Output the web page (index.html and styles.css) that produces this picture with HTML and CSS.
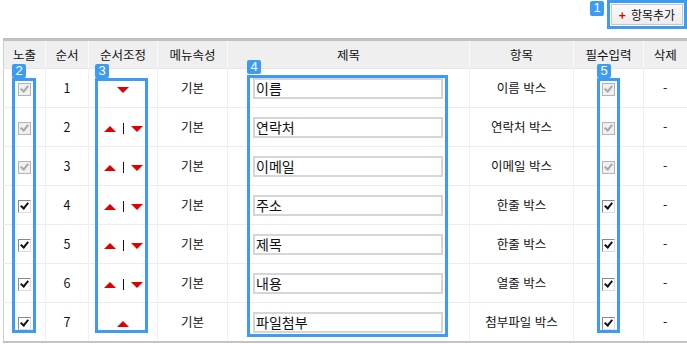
FILE: index.html
```html
<!DOCTYPE html>
<html lang="ko">
<head>
    <meta charset="UTF-8">
    <title>항목 관리</title>
    <link rel="stylesheet" href="styles.css">
</head>
<body>
    <div class="toolbar">
        <span class="badge badge-one">1</span>
        <span class="hl-button">
            <button class="add-btn"><span class="plus">+</span>항목추가</button>
        </span>
    </div>

    <div class="table-wrap">
        <table class="items">
            <colgroup>
                <col style="width:42px"><col style="width:43px"><col style="width:69px"><col style="width:70px">
                <col style="width:242px"><col style="width:104px"><col style="width:70px"><col style="width:43px">
            </colgroup>
            <thead>
                <tr>
                    <th>노출</th><th>순서</th><th>순서조정</th><th>메뉴속성</th>
                    <th>제목</th><th>항목</th><th>필수입력</th><th>삭제</th>
                </tr>
            </thead>
            <tbody>
                <tr>
                    <td><span class="chk off"></span></td><td>1</td>
                    <td><span class="arrow down"></span></td><td>기본</td>
                    <td><div class="field">이름</div></td><td>이름 박스</td>
                    <td><span class="chk off"></span></td><td>-</td>
                </tr>
                <tr>
                    <td><span class="chk off"></span></td><td>2</td>
                    <td><span class="arrow up"></span><span class="sep"></span><span class="arrow down"></span></td><td>기본</td>
                    <td><div class="field">연락처</div></td><td>연락처 박스</td>
                    <td><span class="chk off"></span></td><td>-</td>
                </tr>
                <tr>
                    <td><span class="chk off"></span></td><td>3</td>
                    <td><span class="arrow up"></span><span class="sep"></span><span class="arrow down"></span></td><td>기본</td>
                    <td><div class="field">이메일</div></td><td>이메일 박스</td>
                    <td><span class="chk off"></span></td><td>-</td>
                </tr>
                <tr>
                    <td><span class="chk on"></span></td><td>4</td>
                    <td><span class="arrow up"></span><span class="sep"></span><span class="arrow down"></span></td><td>기본</td>
                    <td><div class="field">주소</div></td><td>한줄 박스</td>
                    <td><span class="chk on"></span></td><td>-</td>
                </tr>
                <tr>
                    <td><span class="chk on"></span></td><td>5</td>
                    <td><span class="arrow up"></span><span class="sep"></span><span class="arrow down"></span></td><td>기본</td>
                    <td><div class="field">제목</div></td><td>한줄 박스</td>
                    <td><span class="chk on"></span></td><td>-</td>
                </tr>
                <tr>
                    <td><span class="chk on"></span></td><td>6</td>
                    <td><span class="arrow up"></span><span class="sep"></span><span class="arrow down"></span></td><td>기본</td>
                    <td><div class="field">내용</div></td><td>열줄 박스</td>
                    <td><span class="chk on"></span></td><td>-</td>
                </tr>
                <tr>
                    <td><span class="chk on"></span></td><td>7</td>
                    <td><span class="arrow up"></span></td><td>기본</td>
                    <td><div class="field">파일첨부</div></td><td>첨부파일 박스</td>
                    <td><span class="chk on"></span></td><td>-</td>
                </tr>
            </tbody>
        </table>

        <!-- annotation boxes -->
        <span class="badge" style="left:12px;top:26px">2</span>
        <div class="hl" style="left:12px;top:40px;width:24px;height:255px"></div>
        <span class="badge" style="left:95px;top:26px">3</span>
        <div class="hl" style="left:95px;top:40px;width:53px;height:255px"></div>
        <span class="badge" style="left:247px;top:22px">4</span>
        <div class="hl" style="left:247px;top:37px;width:201px;height:262px"></div>
        <span class="badge" style="left:597px;top:26px">5</span>
        <div class="hl" style="left:597px;top:40px;width:23px;height:255px"></div>
    </div>
</body>
</html>
```

FILE: styles.css
```css
body {
    margin: 0;
    font-family: "Noto Sans CJK KR", "DejaVu Sans", sans-serif;
    font-size: 12px;
    color: #111;
    background: #fff;
}
.toolbar {
    height: 38px;
    display: flex;
    justify-content: flex-end;
    align-items: flex-start;
}
.hl-button {
    display: flex;
    align-items: center;
    justify-content: center;
    width: 80px;
    height: 29px;
    box-sizing: border-box;
    border: 3px solid #3d9bf3;
}
.add-btn {
    height: 21px;
    width: 72px;
    padding: 0;
    border: 1px solid #c8c8c8;
    background: linear-gradient(#fafafa, #ececec);
    font-family: inherit;
    font-size: 12px;
    color: #111;
    display: flex;
    align-items: center;
    justify-content: center;
    gap: 5px;
}
.plus {
    color: #e00000;
    font-weight: bold;
    font-size: 12px;
    line-height: 1;
}
.badge {
    position: absolute;
    width: 14px;
    height: 14px;
    background: #3d9bf3;
    color: #fff;
    font-family: "Liberation Sans", Arial, sans-serif;
    font-size: 13px;
    line-height: 14px;
    text-align: center;
    border-radius: 2px;
}
.badge-one {
    position: static;
    margin-top: 1px;
    margin-right: 3px;
    height: 15px;
}
.table-wrap {
    position: relative;
}
.hl {
    position: absolute;
    box-sizing: border-box;
    border: 3px solid #3d9bf3;
}
.items {
    margin-left: 3px;
    width: 683px;
    table-layout: fixed;
    border-collapse: collapse;
    border-top: 3px solid #c0c0c0;
    border-left: 1px solid #cfcfcf;
    border-bottom: 2px solid #c4c4c4;
}
.items th {
    height: 27px;
    padding: 0;
    font-weight: normal;
    font-size: 12.5px;
    line-height: 16px;
    background: #efefef;
    border-left: 1px solid #fafafa;
    border-bottom: 1px solid #e6e6e6;
}
.items th:first-child,
.items td:first-child {
    border-left: none;
}
.items td {
    height: 38px;
    padding: 0;
    text-align: center;
    font-size: 12.5px;
    line-height: 16px;
    border-left: 1px solid #f0f0f0;
    border-bottom: 1px solid #ececec;
}
.items tbody tr:last-child td {
    border-bottom: none;
}
.field {
    margin: 0 26px 0 25px;
    height: 21px;
    box-sizing: border-box;
    border: 2px solid #d6d6d6;
    text-align: left;
    font-size: 14px;
    line-height: 17px;
    padding-left: 1px;
}
.chk {
    display: inline-block;
    width: 13px;
    height: 13px;
    box-sizing: border-box;
    vertical-align: middle;
    position: relative;
}
.chk.off {
    border: 1px solid #b4b4b4;
    background: #f0f0f0;
}
.chk.on {
    border: 1px solid #888;
    border-right-color: #ddd;
    border-bottom-color: #ddd;
    background: #fff;
}
.chk::after {
    content: "";
    position: absolute;
    left: 3px;
    top: 0px;
    width: 3px;
    height: 6px;
    border: solid #111;
    border-width: 0 2px 2px 0;
    transform: rotate(40deg);
}
.chk.off::after {
    border-color: #a8a8a8;
}
.arrow {
    display: inline-block;
    width: 0;
    height: 0;
    border-left: 6px solid transparent;
    border-right: 6px solid transparent;
    vertical-align: middle;
}
.arrow.up {
    border-bottom: 6px solid #e00000;
}
.arrow.down {
    border-top: 6px solid #e00000;
}
.sep {
    display: inline-block;
    width: 1px;
    height: 11px;
    margin: 0 7px;
    background: #111;
    vertical-align: middle;
}
```
